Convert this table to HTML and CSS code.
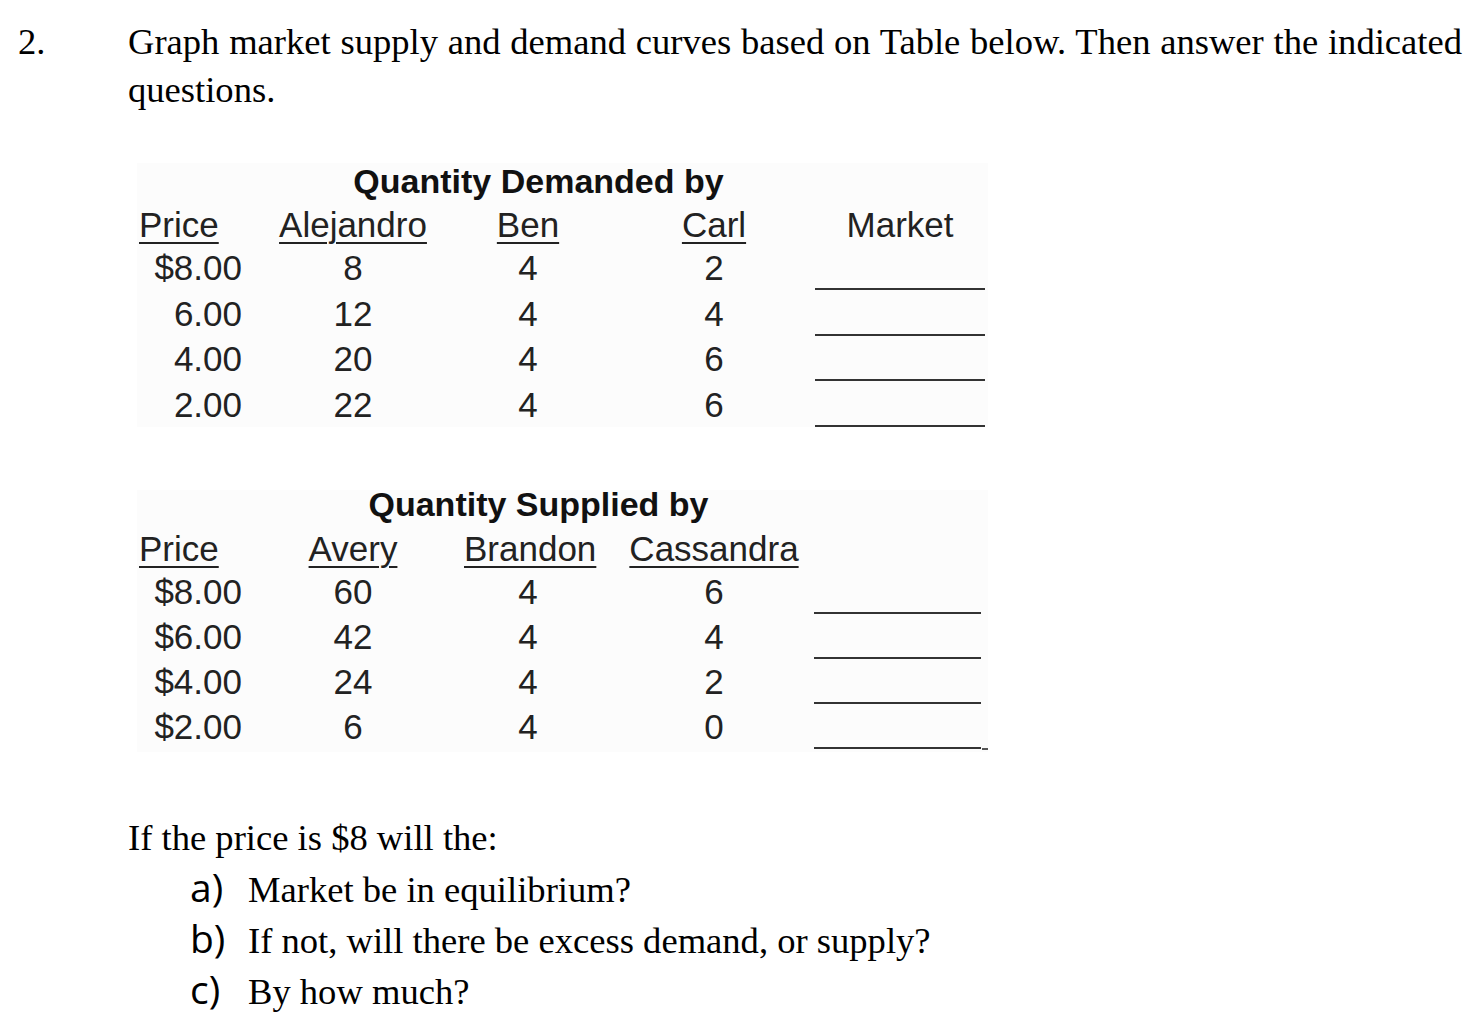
FILE: index.html
```html
<!DOCTYPE html>
<html>
<head>
<meta charset="utf-8">
<link rel="stylesheet" href="styles.css">
</head>
<body>
<div class="q">
  <div class="num">2.</div>
  <div class="qbody">
    <p class="intro">Graph market supply and demand curves based on Table below. Then answer the indicated questions.</p>

    <div class="tbl demand">
      <div class="ttl">Quantity Demanded by</div>
      <div class="grid">
        <div class="h c1"><span class="u">Price</span></div>
        <div class="h c2"><span class="u">Alejandro</span></div>
        <div class="h c3"><span class="u">Ben</span></div>
        <div class="h c4"><span class="u">Carl</span></div>
        <div class="h c5">Market</div>

        <div class="v c1">$8.00</div><div class="v c2">8</div><div class="v c3">4</div><div class="v c4">2</div><div class="blank"></div>
        <div class="v c1">6.00</div><div class="v c2">12</div><div class="v c3">4</div><div class="v c4">4</div><div class="blank"></div>
        <div class="v c1">4.00</div><div class="v c2">20</div><div class="v c3">4</div><div class="v c4">6</div><div class="blank"></div>
        <div class="v c1">2.00</div><div class="v c2">22</div><div class="v c3">4</div><div class="v c4">6</div><div class="blank"></div>
      </div>
    </div>

    <div class="tbl supply">
      <div class="ttl">Quantity Supplied by</div>
      <div class="grid">
        <div class="h c1"><span class="u">Price</span></div>
        <div class="h c2"><span class="u">Avery</span></div>
        <div class="h c3"><span class="u">Brandon</span></div>
        <div class="h c4"><span class="u">Cassandra</span></div>
        <div class="h c5"></div>

        <div class="v c1">$8.00</div><div class="v c2">60</div><div class="v c3">4</div><div class="v c4">6</div><div class="blank"></div>
        <div class="v c1">$6.00</div><div class="v c2">42</div><div class="v c3">4</div><div class="v c4">4</div><div class="blank"></div>
        <div class="v c1">$4.00</div><div class="v c2">24</div><div class="v c3">4</div><div class="v c4">2</div><div class="blank"></div>
        <div class="v c1">$2.00</div><div class="v c2">6</div><div class="v c3">4</div><div class="v c4">0</div><div class="blank tick"></div>
      </div>
    </div>

    <p class="ask">If the price is $8 will the:</p>
    <ul class="parts">
      <li><span class="lbl">a)</span><span>Market be in equilibrium?</span></li>
      <li><span class="lbl">b)</span><span>If not, will there be excess demand, or supply?</span></li>
      <li><span class="lbl">c)</span><span>By how much?</span></li>
    </ul>
  </div>
</div>
</body>
</html>
```

FILE: styles.css
```css
html, body {
  margin: 0;
  padding: 0;
  background: #ffffff;
}

body {
  font-family: "Liberation Serif", "Times New Roman", serif;
  font-size: 36.6px;
  color: #000;
}

.q {
  display: flex;
  padding-left: 18px;
}

.num {
  width: 110px;
  flex: none;
  line-height: 48px;
  margin-top: 18px;
}

.qbody {
  width: 1334px;
}

.intro {
  margin: 18px 0 0 0;
  line-height: 48px;
  text-align: justify;
}

.tbl {
  display: flow-root;
  margin-left: 9px;
  width: 851px;
  background: #fcfcfc;
  font-family: "Liberation Sans", Arial, sans-serif;
  font-size: 35px;
  color: #222;
}

.demand {
  margin-top: 49px;
}

.supply {
  margin-top: 63px;
  padding-bottom: 3px;
}

.ttl {
  font-weight: bold;
  font-size: 34px;
  line-height: 36px;
  text-align: center;
  padding-right: 48px;
  color: #111;
}

.demand .ttl {
  margin-bottom: 3px;
}

.supply .ttl {
  margin-top: -4px;
  margin-bottom: 4px;
}

.grid {
  display: grid;
  grid-template-columns: 103px 222px 128px 223px 170px;
  padding-left: 2px;
  line-height: 45px;
}

.demand .grid {
  grid-template-rows: 43px repeat(4, 45.5px);
}

.supply .grid {
  grid-template-rows: 43px repeat(4, 45px);
}

.c1 {
  text-align: right;
}

.h.c1 {
  text-align: left;
}

.c2, .c3, .c5 {
  text-align: center;
}

.c4 {
  text-align: center;
  padding-left: 21px;
}

.u {
  text-decoration: underline;
  text-decoration-thickness: 2px;
  text-underline-offset: 5px;
}

.blank {
  height: 43px;
  border-bottom: 2px solid #333;
}

.supply .blank {
  height: 43px;
  width: 167px;
  margin-left: -1px;
}

.tick {
  position: relative;
}

.tick::after {
  content: "";
  position: absolute;
  right: -7px;
  bottom: -3px;
  width: 6px;
  height: 2px;
  background: #555;
}

.ask {
  margin: 61px 0 0 0;
  line-height: 50px;
}

.parts {
  list-style: none;
  margin: 0;
  padding: 1px 0 0 62px;
}

.parts li {
  display: flex;
  align-items: baseline;
  line-height: 51px;
  height: 51px;
}

.lbl {
  font-family: "Open Sans", Lato, sans-serif;
  font-size: 39px;
  line-height: 40px;
  width: 58px;
  flex: none;
}
```
